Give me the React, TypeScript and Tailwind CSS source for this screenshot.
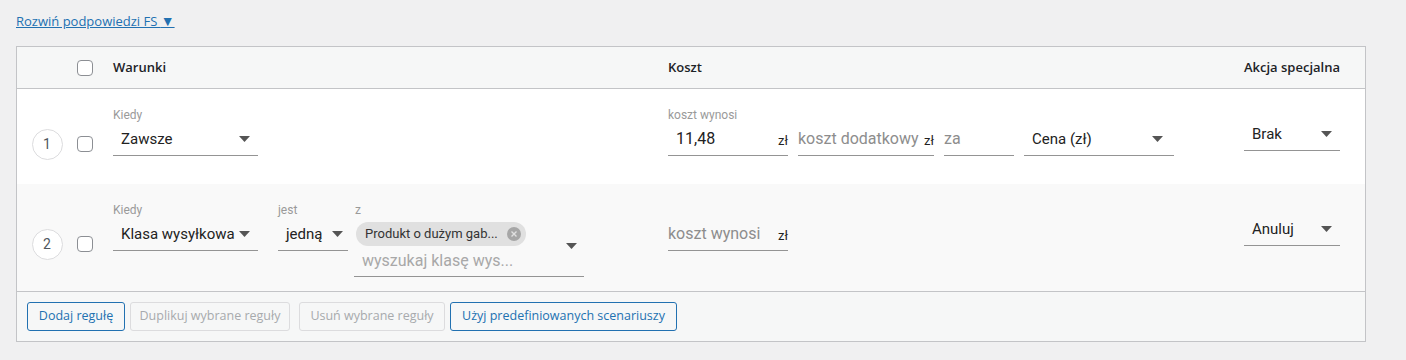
import React from "react";

const WP_FONT = "font-['Open_Sans','Noto_Sans',sans-serif]";
const MD_FONT = "font-['Roboto','Noto_Sans',sans-serif]";

function Caret({ className = "" }: { className?: string }) {
  return (
    <svg width="11" height="6" viewBox="0 0 11 6" className={className}>
      <path d="M0 0h11L5.5 6z" fill="#555" />
    </svg>
  );
}

function Checkbox() {
  return (
    <span className="block h-4 w-4 rounded-[4px] border border-[#8c8f94] bg-white" />
  );
}

function Label({ children }: { children?: React.ReactNode }) {
  return (
    <div className={`h-4 text-[12px] leading-4 text-[#9a9a9a] ${MD_FONT}`}>
      {children}
    </div>
  );
}

function Select({
  value,
  width,
  caretRight = 8,
}: {
  value: string;
  width: string;
  caretRight?: number;
}) {
  return (
    <div
      className={`flex h-[33px] items-center justify-between border-b border-[#949494] pl-2 ${width} ${MD_FONT}`}
      style={{ paddingRight: caretRight }}
    >
      <span className="text-[15px] text-[#222]">{value}</span>
      <Caret />
    </div>
  );
}

function Money({
  value,
  placeholder,
  width,
}: {
  value?: string;
  placeholder?: string;
  width: string;
}) {
  return (
    <div
      className={`flex h-[33px] items-center justify-between border-b border-[#949494] ${width} ${MD_FONT}`}
    >
      {value ? (
        <span className="pl-2 text-[16px] text-[#222]">{value}</span>
      ) : (
        <span className="text-[16px] text-[#8d8d8d]">{placeholder}</span>
      )}
      <span className="pt-1 text-[13px] text-[#222]">zł</span>
    </div>
  );
}

function RowNumber({ n }: { n: number }) {
  return (
    <span
      className={`flex h-[31px] w-[31px] items-center justify-center rounded-full border border-[#dcdcde] bg-white text-[14px] text-[#50575e] ${MD_FONT}`}
    >
      {n}
    </span>
  );
}

function Button({
  children,
  disabled,
  width,
}: {
  children: React.ReactNode;
  disabled?: boolean;
  width: string;
}) {
  return (
    <button
      className={`h-[29px] whitespace-nowrap rounded-[3px] border bg-[#f6f7f7] text-center text-[12.5px] ${WP_FONT} ${width} ${
        disabled
          ? "border-[#dcdcde] text-[#a7aaad]"
          : "border-[#2271b1] text-[#2271b1]"
      }`}
    >
      {children}
    </button>
  );
}

export default function App() {
  return (
    <div className={`min-h-[360px] bg-[#f0f0f1] pl-4 pt-[12px] ${WP_FONT}`}>
      <a className="block w-fit text-[13px] leading-[18px] text-[#2271b1] underline">
        Rozwiń podpowiedzi FS <span className="text-[14px]">▼</span>
      </a>

      <div className="mt-4 w-[1350px] border border-[#c3c4c7] bg-white">
        {/* header */}
        <div className="flex h-[42px] items-center border-b border-[#c3c4c7] bg-[#f6f7f7] text-[13px] font-semibold text-[#1d2327]">
          <div className="w-[60px]" />
          <div className="w-[36px]">
            <Checkbox />
          </div>
          <div className="w-[555px]">Warunki</div>
          <div className="w-[576px]">Koszt</div>
          <div className="w-[96px] whitespace-nowrap">Akcja specjalna</div>
        </div>

        {/* row 1 */}
        <div className="flex h-[95px] items-start bg-white">
          <div className="flex w-[60px] justify-center pt-[40px]">
            <RowNumber n={1} />
          </div>
          <div className="w-[36px] pt-[47px]">
            <Checkbox />
          </div>
          <div className="w-[555px] pt-[18px]">
            <Label>Kiedy</Label>
            <Select value="Zawsze" width="w-[145px]" />
          </div>
          <div className="flex w-[576px] items-end gap-[10px] pt-[18px]">
            <div>
              <Label>koszt wynosi</Label>
              <Money value="11,48" width="w-[120px]" />
            </div>
            <div>
              <Label />
              <Money placeholder="koszt dodatkowy" width="w-[136px]" />
            </div>
            <div>
              <Label />
              <div
                className={`flex h-[33px] w-[70px] items-center border-b border-[#949494] text-[16px] text-[#8d8d8d] ${MD_FONT}`}
              >
                za
              </div>
            </div>
            <div>
              <Label />
              <Select value="Cena (zł)" width="w-[150px]" caretRight={11} />
            </div>
          </div>
          <div className="pt-[29px]">
            <Select value="Brak" width="w-[96px]" />
          </div>
        </div>

        {/* row 2 */}
        <div className="flex h-[107px] items-start bg-[#f9f9f9]">
          <div className="flex w-[60px] justify-center pt-[45px]">
            <RowNumber n={2} />
          </div>
          <div className="w-[36px] pt-[52px]">
            <Checkbox />
          </div>
          <div className="flex w-[555px] items-start pt-[18px]">
            <div>
              <Label>Kiedy</Label>
              <Select value="Klasa wysyłkowa" width="w-[145px]" />
            </div>
            <div className="ml-5">
              <Label>jest</Label>
              <Select value="jedną" width="w-[70px]" caretRight={5} />
            </div>
            <div className="ml-[6px]">
              <div className="pl-px">
                <Label>z</Label>
              </div>
              <div
                className={`relative w-[230px] border-b border-[#949494] pb-[4px] pt-[3px] ${MD_FONT}`}
              >
                <span className="ml-[2px] inline-flex h-6 w-[170px] items-center justify-between rounded-full bg-[#e0e0e0] pl-[9px] pr-[5px] text-[13px] text-[#333]">
                  <span className="whitespace-nowrap">Produkt o dużym gab...</span>
                  <span className="flex h-[14px] w-[14px] shrink-0 items-center justify-center rounded-full bg-[#a6a6a6]">
                    <svg width="6" height="6" viewBox="0 0 6 6">
                      <path
                        d="M0.5 0.5l5 5M5.5 0.5l-5 5"
                        stroke="#e0e0e0"
                        strokeWidth="1.4"
                      />
                    </svg>
                  </span>
                </span>
                <Caret className="absolute right-[7px] top-[25px]" />
                <div className="mt-[4px] pl-2 text-[16px] leading-[22px] text-[#a8a8a8]">
                  wyszukaj klasę wys...
                </div>
              </div>
            </div>
          </div>
          <div className="w-[576px] pt-[18px]">
            <Label />
            <Money placeholder="koszt wynosi" width="w-[120px]" />
          </div>
          <div className="pt-[29px]">
            <Select value="Anuluj" width="w-[96px]" />
          </div>
        </div>

        {/* footer */}
        <div className="flex h-[50px] items-center border-t border-[#c3c4c7] bg-[#f6f7f7] pl-[10px]">
          <Button width="w-[98px]">Dodaj regułę</Button>
          <div className="ml-[5px]">
            <Button disabled width="w-[160px]">
              Duplikuj wybrane reguły
            </Button>
          </div>
          <div className="ml-[9px]">
            <Button disabled width="w-[146px]">
              Usuń wybrane reguły
            </Button>
          </div>
          <div className="ml-[5px]">
            <Button width="w-[227px]">Użyj predefiniowanych scenariuszy</Button>
          </div>
        </div>
      </div>
    </div>
  );
}
